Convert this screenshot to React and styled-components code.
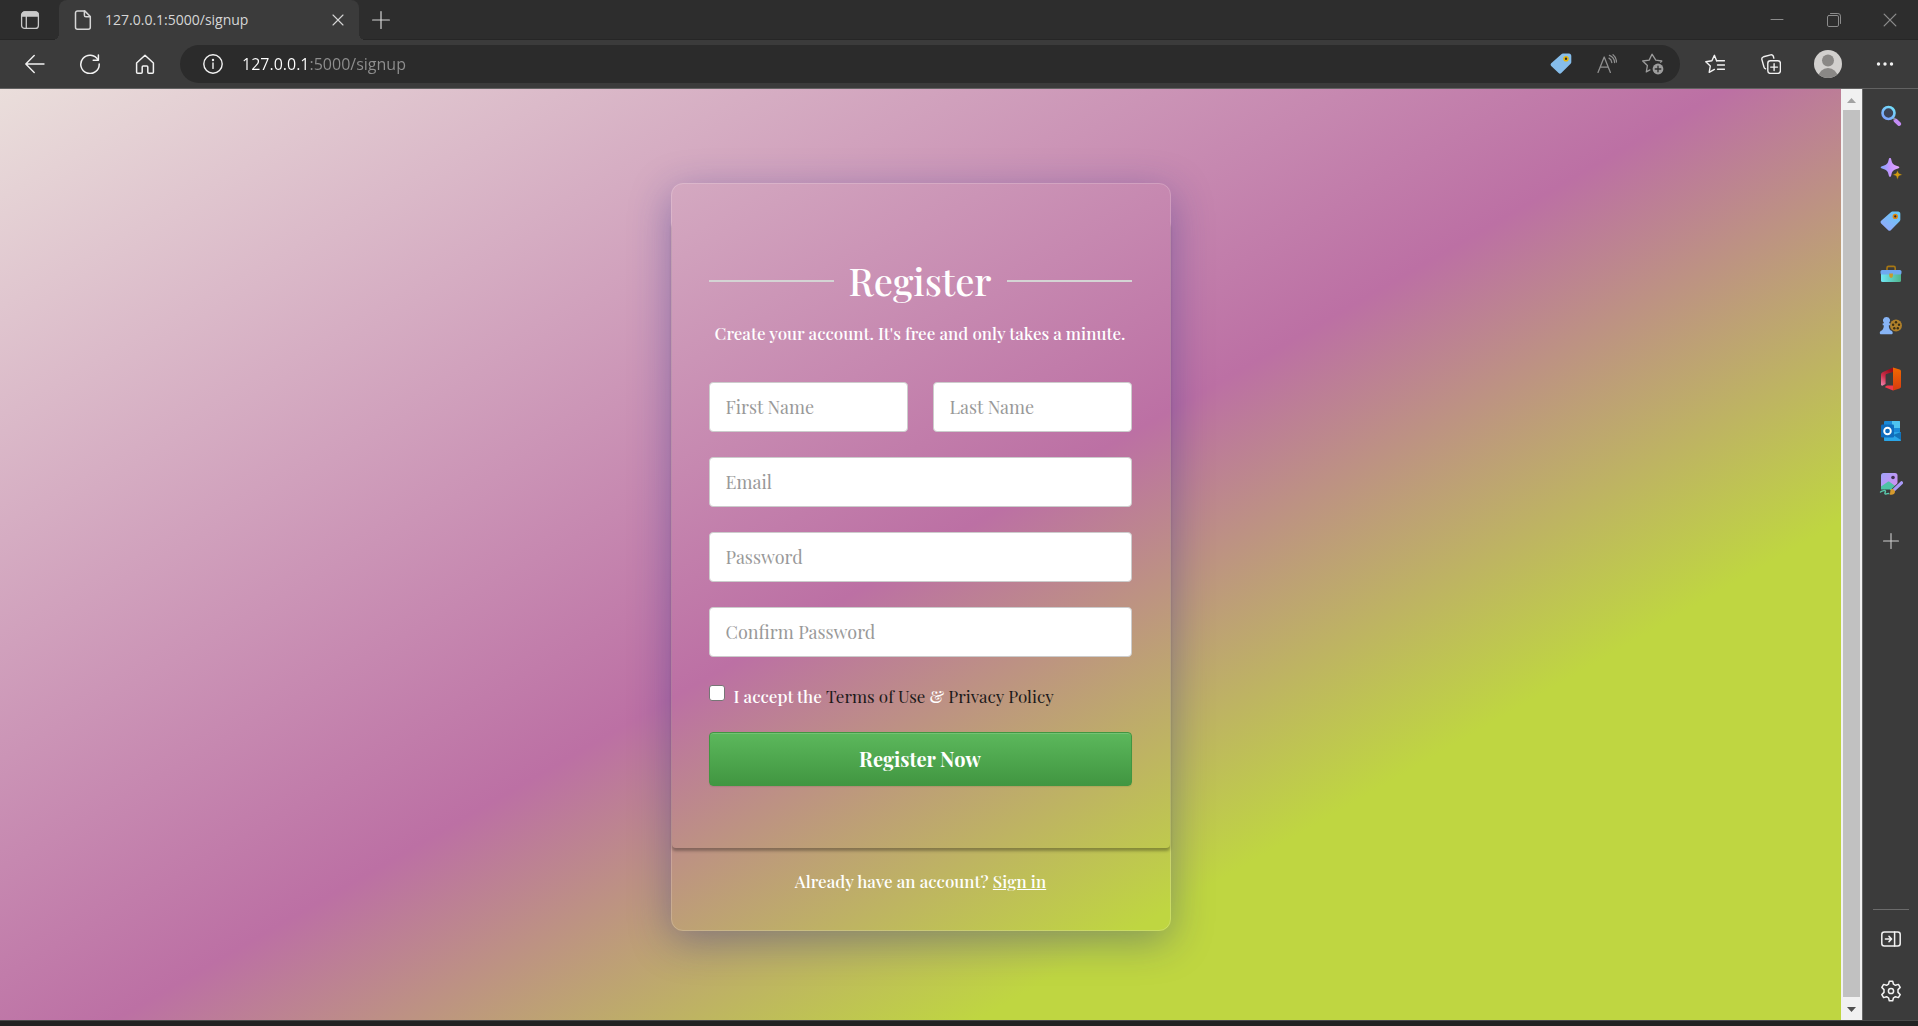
import React from "react";
import styled, { createGlobalStyle } from "styled-components";

const ui = '"Segoe UI", "Open Sans", "Noto Sans", sans-serif';
const serif = '"Playfair Display", "Liberation Serif", serif';

const GlobalStyle = createGlobalStyle`
  *, *::before, *::after { box-sizing: border-box; }
  body { margin: 0; background: #222222; }
  button { padding: 0; border: 0; background: none; cursor: pointer; }
  svg { display: block; flex: none; }
`;

/* ---------- browser shell ---------- */

const Shell = styled.div`
  display: flex;
  flex-direction: column;
  min-height: 100vh;
  padding-bottom: 5px;
  font-family: ${ui};
`;

const TabStrip = styled.header`
  display: flex;
  align-items: stretch;
  height: 40px;
  background: #2d2d2d;
  box-shadow: inset 0 -1px 0 #262626;
`;

const IconButton = styled.button`
  display: flex;
  align-items: center;
  justify-content: center;
  width: ${(p) => p.$w || 46}px;
  height: ${(p) => p.$h || 40}px;
  flex: none;
  color: ${(p) => p.$color || "#f2f2f2"};
`;

const Tab = styled.div`
  position: relative;
  display: flex;
  align-items: center;
  width: 300px;
  padding-left: 14px;
  background: #3b3b3b;
  border-radius: 8px 8px 0 0;
  color: #d6d6d6;

  &::before,
  &::after {
    content: "";
    position: absolute;
    bottom: 0;
    width: 6px;
    height: 6px;
  }
  &::before {
    left: -6px;
    background: radial-gradient(circle at 0 0, transparent 6px, #3b3b3b 6px);
  }
  &::after {
    right: -6px;
    background: radial-gradient(circle at 100% 0, transparent 6px, #3b3b3b 6px);
  }
`;

const TabTitle = styled.span`
  flex: 1;
  padding-left: 12px;
  font-size: 14px;
  line-height: 20px;
`;

const WindowControls = styled.div`
  display: flex;
  margin-left: auto;
`;

const Toolbar = styled.nav`
  display: flex;
  align-items: center;
  height: 49px;
  padding: 0 5px 1px 7px;
  background: #3b3b3b;
  border-bottom: 1px solid #626262;
`;

const AddressBar = styled.div`
  display: flex;
  flex: 1;
  align-items: center;
  height: 38px;
  margin: 0 6px 0 8px;
  padding: 0 4px 0 6px;
  border-radius: 19px;
  background: #2b2b2b;
`;

const AddressInput = styled.input`
  flex: 1;
  min-width: 0;
  padding: 0 0 0 2px;
  border: 0;
  outline: 0;
  font-family: ${ui};
  font-size: 16px;
  line-height: 24px;
  color: transparent;
  background: linear-gradient(90deg, #ffffff 69px, #8f8f8f 69px);
  background-clip: text;
`;

const Body = styled.div`
  display: flex;
  flex: 1;
  border-bottom: 1px solid #4a4a4a;
`;

const ScrollTrack = styled.div`
  display: flex;
  flex-direction: column;
  align-items: center;
  width: 22px;
  background: #f1f1f1;
  border-right: 1px solid #666666;
`;

const ScrollThumb = styled.div`
  flex: 1;
  width: 17px;
  background: #c1c1c1;
`;

const SideBar = styled.aside`
  display: flex;
  flex-direction: column;
  align-items: center;
  width: 55px;
  padding: 1px 0 3px;
  background: #3b3b3b;
`;

const AppList = styled.div`
  display: grid;
  grid-auto-rows: 1fr;
  align-items: center;
  height: 420px;
`;

const SideDivider = styled.hr`
  width: 36px;
  height: 1px;
  margin: auto 0 3px;
  border: 0;
  background: #6b6b6b;
`;

/* ---------- sign-up page ---------- */

const Page = styled.main`
  flex: 1;
  min-width: 0;
  padding: 94px 0 60px;
  background: linear-gradient(150deg, #eadedb 0%, #bc70a4 50%, #bfd641 75%);
  font-family: ${serif};
  color: #ffffff;
`;

const Card = styled.section`
  width: 100%;
  max-width: 500px;
  margin: 0 auto;
  padding-top: 37px;
  border: 1px solid rgba(255, 255, 255, 0.18);
  border-radius: 12px;
  box-shadow: 0 10px 40px rgba(31, 38, 135, 0.37);
`;

const Form = styled.form`
  display: flex;
  flex-direction: column;
  gap: 25px;
  padding: 37px 38px 62px 37px;
  border-radius: 4px;
  box-shadow: 0 3px 3px rgba(0, 0, 0, 0.3);
`;

const Intro = styled.div`
  padding-bottom: 12px;
  text-align: center;
`;

const Title = styled.h1`
  display: flex;
  align-items: center;
  gap: 15px;
  margin: 0;
  font-size: 38px;
  line-height: 46px;
  font-weight: 500;

  &::before,
  &::after {
    content: "";
    flex: 1;
    height: 2px;
    background: #d4d4d4;
  }
`;

const Lead = styled.p`
  margin: 17px 0 0;
  font-size: 17px;
  line-height: 24px;
  font-weight: 500;
`;

const Row = styled.div`
  display: grid;
  grid-template-columns: 1fr 1fr;
  gap: 25px;
`;

const Field = styled.input`
  width: 100%;
  height: 50px;
  padding: 0 16px;
  border: 1px solid #cccccc;
  border-radius: 4px;
  background: #ffffff;
  font-family: ${serif};
  font-size: 18px;
  color: #555555;

  &::placeholder {
    color: #999999;
    opacity: 1;
  }
`;

const Consent = styled.div`
  display: flex;
  gap: 9px;
  height: 25px;
  font-size: 17px;
  line-height: 28px;
  font-weight: 500;
`;

const Tick = styled.input`
  appearance: none;
  width: 16px;
  height: 16px;
  margin: 3px 0 0;
  border: 1px solid #767676;
  border-radius: 3px;
  background: #ffffff;

  &:checked {
    background: #0075ff;
  }
`;

const TextLink = styled.a`
  color: ${(p) => (p.$dark ? "#1c1a1a" : "#ffffff")};
  font-weight: ${(p) => (p.$dark ? 400 : 500)};
  text-decoration: ${(p) => (p.$dark ? "none" : "underline")};
`;

const Submit = styled.button`
  height: 54px;
  padding-bottom: 2px;
  border: 1px solid #419641;
  border-radius: 4px;
  background: linear-gradient(#5cb85c, #419641);
  box-shadow: inset 0 1px 0 rgba(255, 255, 255, 0.15), 0 1px 1px rgba(0, 0, 0, 0.08);
  font-family: ${serif};
  font-size: 20px;
  font-weight: 700;
  color: #ffffff;
`;

const SignIn = styled.p`
  margin: 0;
  padding: 20px 0 36px;
  font-size: 17px;
  line-height: 26px;
  font-weight: 500;
  text-align: center;
`;

/* ---------- icons ---------- */

const Line = ({ size = 20, w = 1.3, children, vb }) => (
  <svg
    width={size}
    height={size}
    viewBox={vb || `0 0 ${size} ${size}`}
    fill="none"
    stroke="currentColor"
    strokeWidth={w}
    strokeLinecap="round"
    strokeLinejoin="round"
    aria-hidden="true"
  >
    {children}
  </svg>
);

const TabActionsIcon = () => (
  <Line>
    <rect x="1.6" y="2" width="16.8" height="16.4" rx="3" />
    <path d="M2 6V5a3 3 0 0 1 3-3h10a3 3 0 0 1 3 3v1z" fill="currentColor" />
    <path d="M6.3 6v12" />
  </Line>
);
const FileIcon = () => (
  <Line w={1.5}>
    <path d="M4.5.9h7.2l5.600 5.600v10.700a2 2 0 0 1-2 2H4.500a2 2 0 0 1-2-2V2.900a2 2 0 0 1 2-2z" />
    <path d="M11.400 1v4.200c0 1 .7 1.600 1.600 1.600h4.200" />
  </Line>
);
const CrossIcon = ({ size = 12 }) => (
  <Line size={size} vb="0 0 12 12" w={1.1}>
    <path d="M1 1l10 10M11 1L1 11" />
  </Line>
);
const PlusIcon = ({ size = 18 }) => (
  <Line size={size} vb="0 0 18 18" w={1.2}>
    <path d="M9 .6v16.800M.6 9h16.800" />
  </Line>
);
const MinimizeIcon = () => (
  <Line size={14} w={1}>
    <path d="M1 6.500h12" />
  </Line>
);
const RestoreIcon = () => (
  <Line size={14} w={1}>
    <rect x=".5" y="2.500" width="11" height="11" rx="1.400" />
    <path d="M3.500.5h7.400a2.600 2.600 0 0 1 2.600 2.600v7.400" />
  </Line>
);
const BackIcon = () => (
  <Line w={1.4}>
    <path d="M19 10H.8M9.200 1.600L.8 10l8.400 8.400" />
  </Line>
);
const ReloadIcon = () => (
  <Line w={1.5}>
    <path d="M18 5.800A9.200 9.200 0 1 0 19.200 10" />
    <path d="M18.400 1v5.200h-5.200" />
  </Line>
);
const HomeIcon = () => (
  <Line w={1.5}>
    <path d="M1.600 9L10 1.200 18.400 9v9.200c0 .6-.4 1-1 1h-3.600c-.6 0-1-.4-1-1V13c0-.6-.4-1-1-1H8.200c-.6 0-1 .4-1 1v5.200c0 .6-.4 1-1 1H2.600c-.6 0-1-.4-1-1z" />
  </Line>
);
const InfoIcon = () => (
  <Line w={1.4}>
    <circle cx="10" cy="10" r="9.200" />
    <path d="M10 9v5.400" />
    <circle cx="10" cy="6" r=".5" fill="currentColor" />
  </Line>
);
const TagIcon = ({ size = 22, flat }) => (
  <svg width={size} height={size} viewBox="0 0 22 22" aria-hidden="true">
    <defs>
      <linearGradient id={flat ? "tagFlat" : "tagBlue"} x1="1" y1="0" x2="0.300" y2="1">
        <stop offset="0" stopColor={flat ? "#86bdea" : "#62ccf5"} />
        <stop offset="1" stopColor={flat ? "#86bdea" : "#92a9fb"} />
      </linearGradient>
    </defs>
    <path
      d="M11.400 1.300c.5-.5 1-.7 1.600-.7h6c1.300 0 2.300 1 2.300 2.300v6.300c0 .6-.3 1.100-.7 1.500l-9.300 9.400c-.8.8-1.900.8-2.700 0L1.200 13c-.8-.8-.8-1.900 0-2.700z"
      fill={flat ? "url(#tagFlat)" : "url(#tagBlue)"}
    />
    <circle cx="16" cy="5.700" r="2" fill="#2f2f2f" stroke={flat ? "#e6b60c" : "#e08a10"} strokeWidth="1.600" />
  </svg>
);
const ReadAloudIcon = () => (
  <Line w={1.3}>
    <path d="M1 18.400L7.200 3l6.200 15.400M3.200 13.200h8" />
    <path d="M12 4.200c1.600.8 2.600 2.300 2.800 4.300M12.400 1.300c3 1.100 5 3.700 5.200 7.200" />
    <path d="M16 .8c2 1.500 3.300 4.200 3.500 7.200" />
  </Line>
);
const StarAddIcon = () => (
  <Line size={22} w={1.3}>
    <path d="M19.800 9.200l1-1.200-6-.9L11 1.200 8.200 7.100l-6.500.9 4.700 4.500-1.100 6.400 3.600-2" transform="translate(-1)" />
    <circle cx="16" cy="16" r="5.400" fill="currentColor" stroke="none" />
    <path d="M16 13.200v5.600M13.200 16h5.600" stroke="#2b2b2b" />
  </Line>
);
const FavoritesIcon = () => (
  <Line size={20} w={1.4}>
    <path d="M11.600 6.800L9.400 1.300 6.900 6.800l-6.100.9 4.500 4.300-1.100 6.300 5.200-2.900" />
    <path d="M11.600 6.800h7.900M12.500 11h7M12.500 15.200h7" />
  </Line>
);
const CollectionsIcon = () => (
  <Line size={20} w={1.4}>
    <rect x="6.800" y="6.800" width="12.600" height="12.600" rx="2.600" />
    <path d="M13.100 9.700v6.800M9.700 13.100h6.800" />
    <path d="M4.600 14.800c-1-.4-1.500-1-1.700-2L.9 5.600C.6 4.300 1.200 3.200 2.500 2.800L9.700.9c1.300-.3 2.400.3 2.700 1.600l.4 1.600" />
  </Line>
);
const AvatarIcon = () => (
  <svg width="28" height="28" viewBox="0 0 28 28" aria-hidden="true">
    <clipPath id="avatarClip">
      <circle cx="14" cy="14" r="14" />
    </clipPath>
    <g clipPath="url(#avatarClip)">
      <rect width="28" height="28" fill="#d2d0ce" />
      <circle cx="14" cy="10.500" r="6" fill="#8a8886" />
      <ellipse cx="14" cy="27" rx="9.600" ry="9" fill="#8a8886" />
    </g>
  </svg>
);
const DotsIcon = () => (
  <svg width="18" height="18" viewBox="0 0 18 18" fill="currentColor" aria-hidden="true">
    <circle cx="2.500" cy="9" r="1.700" />
    <circle cx="9" cy="9" r="1.700" />
    <circle cx="15.500" cy="9" r="1.700" />
  </svg>
);
const ArrowGlyph = ({ down }) => (
  <svg width="21" height={down ? 23 : 21} viewBox={down ? "0 0 21 23" : "0 0 21 21"} aria-hidden="true">
    {down ? <path d="M6 10h9l-4.500 5z" fill="#505050" /> : <path d="M6 14h9l-4.500-5z" fill="#a3a3a3" />}
  </svg>
);

const Art = ({ children }) => (
  <svg width="24" height="24" viewBox="0 0 24 24" aria-hidden="true">
    {children}
  </svg>
);
const SearchArt = () => (
  <Art>
    <defs>
      <linearGradient id="lens" x1="0" y1="1" x2="0.700" y2="0">
        <stop offset="0" stopColor="#7f9cff" />
        <stop offset="1" stopColor="#74dcfb" />
      </linearGradient>
    </defs>
    <path d="M16.500 16.500l3.700 3.500" stroke="#c48cf5" strokeWidth="4" strokeLinecap="round" />
    <path d="M14 13.500l2 2" stroke="#8b8b92" strokeWidth="2" />
    <circle cx="9.500" cy="9" r="6" fill="#3d4356" stroke="url(#lens)" strokeWidth="2.600" />
  </Art>
);
const SparkleArt = () => (
  <Art>
    <defs>
      <linearGradient id="spark" x1="0" y1="0.500" x2="1" y2="0.500">
        <stop offset="0" stopColor="#7fa6ff" />
        <stop offset="0.500" stopColor="#c596ff" />
        <stop offset="1" stopColor="#e3a5ff" />
      </linearGradient>
    </defs>
    <path d="M11 1c.7 0 1 .5 1.200 1.200.9 4.800 2.400 5.500 6.800 7 .8.2 1.300.5 1.300 1.100s-.5.9-1.300 1.100c-4.400 1.500-5.900 2.200-6.800 7-.2.900-.5 1.400-1.200 1.400s-1-.5-1.200-1.400c-.9-4.800-2.400-5.500-6.800-7-.8-.2-1.300-.5-1.300-1.100S2.200 9.400 3 9.200c4.400-1.500 5.900-2.200 6.800-7C10 1.500 10.300 1 11 1z" fill="url(#spark)" />
    <path d="M18.500 13.200l1.400 3.100 3.600 1.400-3.600 1.400-1.400 3.600-1.400-3.600-3.600-1.400 3.600-1.400z" fill="#d19a0e" stroke="#3b3b3b" strokeWidth=".5" />
  </Art>
);
const ToolboxArt = () => (
  <Art>
    <defs>
      <linearGradient id="boxBody" x1="0" y1="0" x2="1" y2="0">
        <stop offset="0" stopColor="#6fe6f5" />
        <stop offset="1" stopColor="#4fb58c" />
      </linearGradient>
    </defs>
    <path d="M8 8V6c0-1 .6-1.600 1.600-1.600h5c1 0 1.600.6 1.600 1.600v2" fill="none" stroke="#a87713" strokeWidth="1.600" />
    <rect x="2" y="9" width="20" height="11" rx="1.500" fill="url(#boxBody)" />
    <rect x="1.500" y="8" width="21" height="4.600" rx="1.500" fill="#6fa8f0" />
    <path d="M10.300 11.500h3.600v2.600a1.800 1.800 0 0 1-3.600 0z" fill="#c99a2a" />
  </Art>
);
const GamesArt = () => (
  <Art>
    <circle cx="17" cy="11.500" r="6" fill="#b0802a" />
    <g fill="#3b2e16">
      <circle cx="17" cy="8.300" r="1.200" />
      <circle cx="14.100" cy="10.800" r="1.200" />
      <circle cx="20" cy="10.800" r="1.200" />
      <circle cx="15.300" cy="14.200" r="1.200" />
      <circle cx="18.800" cy="14.200" r="1.200" />
    </g>
    <path d="M7.500 3a3.600 3.600 0 0 1 2.400 6.300h1.300v2H9.800c0 2.500.6 4 1.900 5.200 1.400.4 2 1.200 2 2.300 0 1-.5 1.500-1.400 1.500H2.200c-.9 0-1.400-.5-1.400-1.500 0-1.100.7-1.900 2-2.300 1.400-1.200 2-2.700 2-5.200H3.700v-2h1.400A3.600 3.600 0 0 1 7.500 3z" fill="#87b4f5" />
  </Art>
);
const OfficeArt = () => (
  <Art>
    <defs>
      <linearGradient id="officeLeft" x1="0" y1="1" x2="0.500" y2="0">
        <stop offset="0" stopColor="#f08ab4" />
        <stop offset="0.500" stopColor="#d0304c" />
        <stop offset="1" stopColor="#9c0d1c" />
      </linearGradient>
      <linearGradient id="officeRight" x1="0" y1="0" x2="0" y2="1">
        <stop offset="0" stopColor="#f06a00" />
        <stop offset="1" stopColor="#d83b10" />
      </linearGradient>
    </defs>
    <path d="M14 .5L4 5c-1.200.5-2 1.500-2 2.800v9.700c0 1 .9 1.500 1.800 1l2.800-1.600V8.400c0-.9.500-1.500 1.400-1.700L14 5z" fill="url(#officeLeft)" />
    <path d="M6 20.300l8 3.200 2-2v-3H8.300c-1 0-1.800.8-2.300 1.800z" fill="#f0384c" />
    <path d="M14 .5l6.600 2c1 .3 1.400 1 1.400 2v15c0 1-.5 1.600-1.400 1.900L14 23.500z" fill="url(#officeRight)" />
  </Art>
);
const OutlookArt = () => (
  <Art>
    <rect x="5" y="2" width="16" height="12" rx="1" fill="#1a8ad8" />
    <path d="M13 2h7c.6 0 1 .4 1 1v6h-8z" fill="#4ec3f0" />
    <path d="M5 13h17v8c0 .6-.4 1-1 1H6c-.6 0-1-.4-1-1z" fill="#2aa6e8" />
    <path d="M22 13v8l-8-5z" fill="#1272b8" />
    <rect x="2" y="5.500" width="13" height="13" rx="1.200" fill="#0f6cbd" />
    <circle cx="8.500" cy="12" r="3.300" fill="none" stroke="#ffffff" strokeWidth="1.900" />
  </Art>
);
const DesignerArt = () => (
  <Art>
    <defs>
      <linearGradient id="photo" x1="0" y1="0" x2="1" y2="1">
        <stop offset="0" stopColor="#9fa4fb" />
        <stop offset="1" stopColor="#d98cf0" />
      </linearGradient>
    </defs>
    <rect x="2" y="1" width="16.500" height="17" rx="2.500" fill="url(#photo)" />
    <path d="M2 14.500l6.500-4.600c.7-.5 1.500-.5 2.200 0L17 14.500l-3 3.500H2z" fill="#4dc3a5" />
    <circle cx="14" cy="5.500" r="1.800" fill="#3f3153" />
    <path d="M2 17.500h9v3H2z" fill="#3b3b3b" />
    <path d="M22.800 10.500L15 18" stroke="#3b3b3b" strokeWidth="4.800" strokeLinecap="round" />
    <path d="M22.500 10.800L15 17.800" stroke="#a99af8" strokeWidth="3.200" strokeLinecap="round" />
    <path d="M12 17.200c1.700-.8 4 .4 4 2.600 0 2.600-3 3.400-5.500 2.600 1.300-1.300.2-3.800 1.500-5.200z" fill="#d69a2d" />
    <path d="M1.500 20c2-1.500 5-2 5-.8S5 21.800 6.500 22s2.200-.7 3.200-.5" fill="none" stroke="#59c9ac" strokeWidth="1.400" strokeLinecap="round" />
  </Art>
);
const PanelIcon = () => (
  <Line size={20} w={1.5}>
    <rect x=".8" y="3" width="18.400" height="14" rx="2.500" />
    <path d="M13.600 3v14M4.400 10h6M8 7.400l2.600 2.600L8 12.600" />
  </Line>
);
const GearIcon = () => (
  <Line size={22} w={1.5}>
    <path d="M9.300 1.200h3.400l.8 3 1.900 1.100 3-.9 1.800 3-2.200 2.200v2.800l2.200 2.200-1.800 3-3-.9-1.900 1.100-.8 3H9.300l-.8-3-1.900-1.100-3 .9-1.800-3L4 12.400V9.600L1.800 7.400l1.800-3 3 .9 1.900-1.100z" />
    <circle cx="11" cy="11" r="2.600" />
  </Line>
);

const SIDE_APPS = [
  ["Search", SearchArt],
  ["Discover", SparkleArt],
  ["Shopping", () => <TagIcon size={21} />],
  ["Tools", ToolboxArt],
  ["Games", GamesArt],
  ["Office", OfficeArt],
  ["Outlook", OutlookArt],
  ["Image Creator", DesignerArt],
];

export default function App() {
  return (
    <Shell>
      <GlobalStyle />
      <TabStrip>
        <IconButton $w={59} $color="#c9c9c9" aria-label="Tab actions"><TabActionsIcon /></IconButton>
        <Tab>
          <FileIcon />
          <TabTitle>127.0.0.1:5000/signup</TabTitle>
          <IconButton $w={42} $color="#d6d6d6" aria-label="Close tab"><CrossIcon /></IconButton>
        </Tab>
        <IconButton $w={44} $color="#d6d6d6" aria-label="New tab"><PlusIcon /></IconButton>
        <WindowControls>
          <IconButton $w={57} $color="#8c8c8c" aria-label="Minimize"><MinimizeIcon /></IconButton>
          <IconButton $w={57} $color="#8c8c8c" aria-label="Restore"><RestoreIcon /></IconButton>
          <IconButton $w={56} $color="#8c8c8c" aria-label="Close"><CrossIcon size={14} /></IconButton>
        </WindowControls>
      </TabStrip>

      <Toolbar>
        <IconButton $w={55} aria-label="Back"><BackIcon /></IconButton>
        <IconButton $w={55} aria-label="Refresh"><ReloadIcon /></IconButton>
        <IconButton $w={55} aria-label="Home"><HomeIcon /></IconButton>
        <AddressBar>
          <IconButton $w={54} $h={38} aria-label="Site information"><InfoIcon /></IconButton>
          <AddressInput aria-label="Address" defaultValue="127.0.0.1:5000/signup" />
          <IconButton $h={38} aria-label="Coupons"><TagIcon flat /></IconButton>
          <IconButton $h={38} $color="#8f8f8f" aria-label="Read aloud"><ReadAloudIcon /></IconButton>
          <IconButton $h={38} $color="#9c9c9c" aria-label="Add to favorites"><StarAddIcon /></IconButton>
        </AddressBar>
        <IconButton $w={57} aria-label="Favorites"><FavoritesIcon /></IconButton>
        <IconButton $w={55} aria-label="Collections"><CollectionsIcon /></IconButton>
        <IconButton $w={59} aria-label="Profile"><AvatarIcon /></IconButton>
        <IconButton $w={56} aria-label="Settings and more"><DotsIcon /></IconButton>
      </Toolbar>

      <Body>
        <Page>
          <Card>
            <Form onSubmit={(e) => e.preventDefault()}>
              <Intro>
                <Title>Register</Title>
                <Lead>Create your account. It's free and only takes a minute.</Lead>
              </Intro>
              <Row>
                <Field type="text" placeholder="First Name" aria-label="First Name" />
                <Field type="text" placeholder="Last Name" aria-label="Last Name" />
              </Row>
              <Field type="email" placeholder="Email" aria-label="Email" />
              <Field type="password" placeholder="Password" aria-label="Password" />
              <Field type="password" placeholder="Confirm Password" aria-label="Confirm Password" />
              <Consent>
                <Tick type="checkbox" id="accept" />
                <label htmlFor="accept">
                  I accept the <TextLink $dark href="#terms">Terms of Use</TextLink> &amp;{" "}
                  <TextLink $dark href="#privacy">Privacy Policy</TextLink>
                </label>
              </Consent>
              <Submit type="submit">Register Now</Submit>
            </Form>
            <SignIn>
              Already have an account? <TextLink href="#signin">Sign in</TextLink>
            </SignIn>
          </Card>
        </Page>
        <ScrollTrack>
          <ArrowGlyph />
          <ScrollThumb />
          <ArrowGlyph down />
        </ScrollTrack>
        <SideBar>
          <AppList>
            {SIDE_APPS.map(([name, Icon]) => (
              <IconButton key={name} $w={55} aria-label={name}><Icon /></IconButton>
            ))}
          </AppList>
          <IconButton $w={55} $h={62} $color="#d0d0d0" aria-label="Customize"><PlusIcon size={16} /></IconButton>
          <SideDivider />
          <IconButton $w={55} $h={52} aria-label="Hide sidebar"><PanelIcon /></IconButton>
          <IconButton $w={55} $h={52} aria-label="Settings"><GearIcon /></IconButton>
        </SideBar>
      </Body>
    </Shell>
  );
}
